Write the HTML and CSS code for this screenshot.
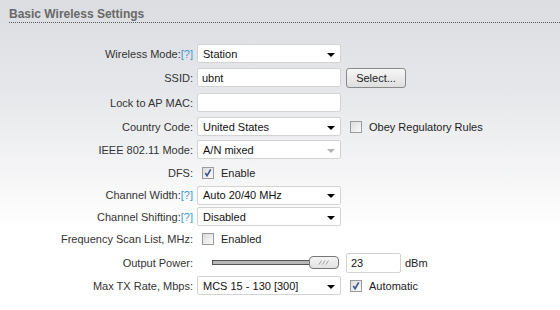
FILE: index.html
```html
<!DOCTYPE html>
<html lang="en">
<head>
    <meta charset="UTF-8">
    <title>Basic Wireless Settings</title>
    <link rel="stylesheet" href="styles.css">
</head>
<body>
    <h3 class="title">Basic Wireless Settings</h3>

    <div class="form">
        <!-- Wireless mode -->
        <label class="label">Wireless Mode:<a class="help">[?]</a></label>
        <div class="select"><span>Station</span><i class="arrow"></i></div>
        <div class="extra"></div>

        <label class="label">SSID:</label>
        <div class="input">ubnt</div>
        <div class="extra"><button class="button">Select...</button></div>

        <label class="label">Lock to AP MAC:</label>
        <div class="input"></div>
        <div class="extra"></div>

        <label class="label">Country Code:</label>
        <div class="select"><span>United States</span><i class="arrow"></i></div>
        <div class="extra"><span class="check"></span><span class="check-text">Obey Regulatory Rules</span></div>

        <label class="label">IEEE 802.11 Mode:</label>
        <div class="select disabled"><span>A/N mixed</span><i class="arrow"></i></div>
        <div class="extra"></div>

        <label class="label">DFS:</label>
        <div class="inline"><span class="check checked"><svg viewBox="0 0 11 11"><path d="M2.5 5.5 L4.5 8.5 L8.5 1.5" /></svg></span><span class="check-text">Enable</span></div>
        <div class="extra"></div>

        <label class="label">Channel Width:<a class="help">[?]</a></label>
        <div class="select"><span>Auto 20/40 MHz</span><i class="arrow"></i></div>
        <div class="extra"></div>

        <label class="label">Channel Shifting:<a class="help">[?]</a></label>
        <div class="select"><span>Disabled</span><i class="arrow"></i></div>
        <div class="extra"></div>

        <label class="label">Frequency Scan List, MHz:</label>
        <div class="inline"><span class="check"></span><span class="check-text">Enabled</span></div>
        <div class="extra"></div>

        <label class="label">Output Power:</label>
        <div class="inline">
            <div class="slider-track"></div>
            <div class="slider-handle"><svg viewBox="0 0 28 11"><path d="M9 7.5 L11.5 3.5 M12.5 7.5 L15 3.5 M16 7.5 L18.5 3.5" /></svg></div>
        </div>
        <div class="extra"><div class="input small">23</div><span class="unit">dBm</span></div>

        <label class="label">Max TX Rate, Mbps:</label>
        <div class="select"><span>MCS 15 - 130 [300]</span><i class="arrow"></i></div>
        <div class="extra"><span class="check checked"><svg viewBox="0 0 11 11"><path d="M2.5 5.5 L4.5 8.5 L8.5 1.5" /></svg></span><span class="check-text">Automatic</span></div>
    </div>
</body>
</html>
```

FILE: styles.css
```css
body {
    margin: 0;
    height: 310px;
    overflow: hidden;
    font-family: "Liberation Sans", Arial, sans-serif;
    font-size: 11px;
    color: #333;
    background: linear-gradient(#dbdde1 0, #e6e7ea 90px, #ffffff 230px);
}

.title {
    margin: 7px 0 0 9px;
    padding-bottom: 1px;
    font-size: 12px;
    line-height: 14px;
    font-weight: bold;
    color: #696969;
    border-bottom: 1px dotted #5a5a5a;
}

.form {
    display: grid;
    grid-template-columns: 185px 144px auto;
    grid-template-rows: 23px 25px 25px 23px 23px 23px 22px 21px 24px 23px 23px;
    column-gap: 4px;
    padding: 19px 0 0 8px;
}

.label {
    display: flex;
    align-items: center;
    justify-content: flex-end;
    white-space: nowrap;
}

.help {
    color: #3d9ad1;
}

.extra {
    display: flex;
    align-items: center;
    padding-left: 1px;
}

.inline {
    display: flex;
    align-items: center;
}

.select, .input {
    align-self: center;
    display: flex;
    align-items: center;
    box-sizing: border-box;
    height: 19px;
    padding: 0 5px;
    background: #fff;
    border: 1px solid #d3d3d3;
    border-radius: 2px;
    color: #111;
    font-size: 11px;
}

.input {
    padding-left: 4px;
}

.select span {
    flex: 1;
}

.arrow {
    width: 0;
    height: 0;
    margin: 2px 0 0;
    border-left: 4px solid transparent;
    border-right: 4px solid transparent;
    border-top: 4px solid #000;
}

.select.disabled .arrow {
    border-top-color: #b4b4b4;
}

.button {
    box-sizing: border-box;
    width: 60px;
    height: 20px;
    padding: 0;
    font-family: inherit;
    font-size: 11px;
    color: #222;
    background: linear-gradient(#f7f7f7, #dedede);
    border: 1px solid #8a8a8a;
    border-radius: 3px;
}

.check {
    display: inline-block;
    box-sizing: border-box;
    width: 12px;
    height: 12px;
    margin-left: 4px;
    border: 1px solid #9a9a9a;
    background: linear-gradient(135deg, #dcdcdc, #fbfbfb);
}

.inline .check {
    margin-left: 5px;
}

.check svg {
    display: block;
    width: 10px;
    height: 10px;
}

.check svg path {
    fill: none;
    stroke: #3c5690;
    stroke-width: 1.8;
}

.check-text {
    margin-left: 7px;
    font-size: 11px;
    color: #222;
}

.slider-track {
    box-sizing: border-box;
    width: 99px;
    height: 5px;
    margin-left: 15px;
    background: #b6b9b6;
    border: 1px solid #555;
}

.slider-handle {
    box-sizing: border-box;
    width: 30px;
    height: 13px;
    margin-left: -2px;
    background: linear-gradient(#f4f4f4, #e2e2e2);
    border: 1px solid #777;
    border-radius: 4px;
}

.slider-handle svg {
    display: block;
    width: 28px;
    height: 11px;
}

.slider-handle path {
    stroke: #a0a0a0;
    stroke-width: 1;
}

.input.small {
    width: 55px;
    height: 20px;
}

.unit {
    margin-left: 4px;
    font-size: 11px;
    color: #222;
}
```
